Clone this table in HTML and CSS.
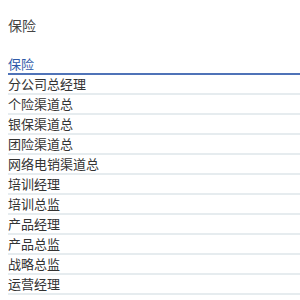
FILE: index.html
```html
<!DOCTYPE html>
<html lang="zh">
<head>
<meta charset="utf-8">
<link rel="stylesheet" href="styles.css">
</head>
<body>
<div class="page">
  <h1 class="title">保险</h1>
  <table class="list">
    <thead><tr><th>保险</th></tr></thead>
    <tbody>
      <tr><td>分公司总经理</td></tr>
      <tr><td>个险渠道总</td></tr>
      <tr><td>银保渠道总</td></tr>
      <tr><td>团险渠道总</td></tr>
      <tr><td>网络电销渠道总</td></tr>
      <tr><td>培训经理</td></tr>
      <tr><td>培训总监</td></tr>
      <tr><td>产品经理</td></tr>
      <tr><td>产品总监</td></tr>
      <tr><td>战略总监</td></tr>
      <tr><td>运营经理</td></tr>
    </tbody>
  </table>
</div>
</body>
</html>
```
FILE: styles.css
```css
html, body {
  margin: 0;
  padding: 0;
  background: #ffffff;
}
body {
  font-family: "Noto Sans CJK SC", "Noto Sans", sans-serif;
  color: #333333;
}
.page {
  padding: 16px 0 0 8px;
}
.title {
  margin: 0;
  font-size: 14px;
  font-weight: normal;
  line-height: 18px;
  color: #444444;
}
.list {
  width: 100%;
  border-collapse: collapse;
  margin-top: 20px;
}
.list th {
  text-align: left;
  font-weight: normal;
  font-size: 13px;
  line-height: 19px;
  color: #2f5aa8;
  padding: 0;
  border-bottom: 2px solid #4f73b8;
}
.list td {
  font-size: 13px;
  line-height: 18px;
  padding: 0;
  border-bottom: 2px solid #e6ecef;
  color: #333333;
}
```
